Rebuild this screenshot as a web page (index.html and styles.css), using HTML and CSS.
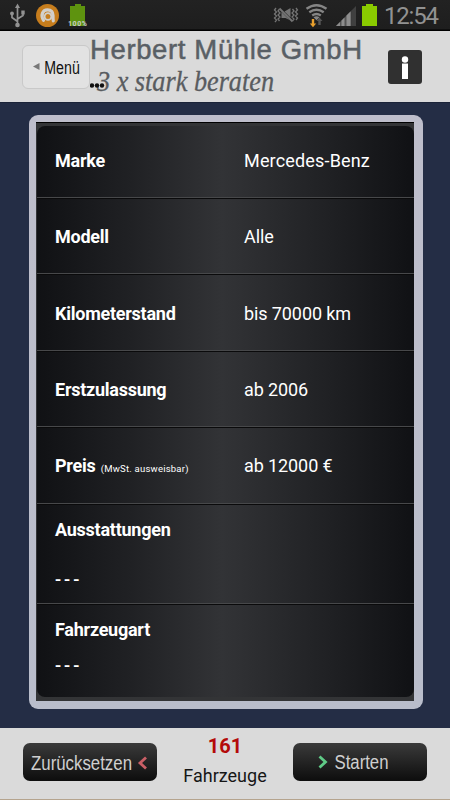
FILE: index.html
```
<!DOCTYPE html>
<html lang="de">
<head>
  <meta charset="UTF-8" />
  <meta name="viewport" content="width=device-width, initial-scale=1.0"/>
  <title>Herbert Mühle GmbH</title>
  <link rel="stylesheet" href="styles.css">
</head>
<body>
  <!-- Status bar -->
  <svg class="status-bar" width="450" height="31" viewBox="0 0 450 31">
    <!-- usb -->
    <g fill="none" stroke="#929292" stroke-width="1.7">
      <path d="M17.500 7v18M17.500 21.500l-5.500-4v-4M17.500 19l5.500-3.500v-4"/>
    </g>
    <path fill="#929292" d="M17.500 3.500l2.500 4.500h-5z"/>
    <circle cx="17.500" cy="25" r="2.300" fill="#929292"/>
    <circle cx="12" cy="13.500" r="1.900" fill="#929292"/>
    <path fill="#929292" d="M21.300 10.500h3.400v4h-3.400z"/>
    <!-- avast -->
    <circle cx="47.500" cy="15.500" r="11.500" fill="#c67d1d"/>
    <path fill="none" stroke="#d2d0cc" stroke-width="3.200" stroke-linecap="round" d="M43.500 20.300C40.500 15 42.500 9.800 47.500 9.800c3.700 0 5.500 2.500 5.500 5.500 0 2.500 0 4.500.3 5.500"/>
    <circle cx="48" cy="16.500" r="3.400" fill="none" stroke="#d2d0cc" stroke-width="1.800"/>
    <!-- battery level -->
    <path fill="#5e930f" d="M75 4h6v2h4v20H70V6h5z"/>
    <text class="battery-text" x="68" y="26" textLength="19">100%</text>
    <!-- vibrate off -->
    <g fill="none" stroke="#747474" stroke-width="1.300">
      <path d="M276 8l-1.500 2 2 2-2 2 2 2-2 2 2 2-1.500 2M279.500 9l-1.500 2 2 2-2 2 2 2-2 2 1.500 2M292.500 9l1.500 2-2 2 2 2-2 2 2 2-1.500 2M296 8l1.500 2-2 2 2 2-2 2 2 2-1.500 2"/>
      <path d="M279.500 8.500l13 13" stroke-width="1.800"/>
    </g>
    <path fill="#747474" d="M281.500 12l8 8-4-2h-4zM284.500 11.500l6-3.500v9.500z"/>
    <!-- wifi -->
    <g fill="none" stroke="#858585" stroke-width="2.300">
      <path d="M306.500 8.800q10-7.200 20 0M309.300 12.300q7.200-5.200 14.400 0M312.200 15.500q4.300-3 8.600 0"/>
    </g>
    <path fill="#858585" d="M313.500 17.200q3-2 6 0l-3 3z"/>
    <path fill="#e9a02d" d="M311.800 19h2.400v4.500h2l-3.200 3.800-3.200-3.800h2z"/>
    <path fill="#555" d="M318.300 25v-4h-1.800l3-3.500 3 3.500h-1.800v4z"/>
    <!-- signal -->
    <path fill="#555" d="M336 26l15.500-15.500V26z"/>
    <path fill="#8d8d8d" d="M336 26l4-4v4zM341.500 20.500l3-3V26h-3zM346.500 15.500l4-4V26h-4z"/>
    <path fill="#404040" d="M351.500 10.500L356 6v20h-4.500z"/>
    <!-- battery -->
    <path fill="#8acb00" d="M366 4h7v2h4v20h-15V6h4z"/>
    <text class="clock" x="384" y="23.500" textLength="55">12:54</text>
  </svg>

  <header class="header">
    <button class="menu-btn">
      <svg width="66" height="42" viewBox="0 0 66 42">
        <path fill="#777" d="M10 20.500l6.500-3.500v7z"/>
        <text class="menu-label" x="21.300" y="27.500" textLength="35.500" lengthAdjust="spacingAndGlyphs">Menü</text>
      </svg>
    </button>
    <svg class="logo" width="275" height="68" viewBox="0 0 275 68">
      <text class="logo-name" x="0" y="28" textLength="272">Herbert Mühle GmbH</text>
      <text class="logo-claim" x="7" y="60" textLength="177" lengthAdjust="spacingAndGlyphs">3 x stark beraten</text>
      <g fill="#111">
        <circle cx="2" cy="54.500" r="2.200"/>
        <circle cx="7" cy="54.500" r="2.200"/>
        <circle cx="12" cy="54.500" r="2.200"/>
      </g>
    </svg>
    <button class="info-btn">
      <svg width="34" height="34" viewBox="0 0 34 34">
        <circle cx="17" cy="9.500" r="3.200" fill="#fff"/>
        <path fill="#fff" d="M14 13.500h6V29h-6z"/>
      </svg>
    </button>
  </header>

  <main class="main">
    <div class="panel">
      <div class="panel-inner">
        <div class="list">
          <div class="row first"><span class="label">Marke</span><span class="value brand">Mercedes-Benz</span></div>
          <div class="row"><span class="label">Modell</span><span class="value">Alle</span></div>
          <div class="row"><span class="label">Kilometerstand</span><span class="value">bis 70000 km</span></div>
          <div class="row"><span class="label">Erstzulassung</span><span class="value">ab 2006</span></div>
          <div class="row"><span class="label">Preis <small>(MwSt. ausweisbar)</small></span><span class="value">ab 12000 €</span></div>
          <div class="row tall equip"><span class="label">Ausstattungen</span><span class="dashes">---</span></div>
          <div class="row tall type"><span class="label">Fahrzeugart</span><span class="dashes">---</span></div>
        </div>
      </div>
    </div>
  </main>

  <footer class="footer">
    <button class="action-btn">
      <svg width="134" height="38" viewBox="0 0 134 38">
        <text class="action-label" x="8" y="26.500" textLength="101" lengthAdjust="spacingAndGlyphs">Zurücksetzen</text>
        <path fill="none" stroke="#c95f66" stroke-width="2.800" d="M123 14.500l-6 5.500 6 5.500"/>
      </svg>
    </button>
    <div class="count">
      <span class="count-number">161</span>
      <span class="count-label">Fahrzeuge</span>
    </div>
    <button class="action-btn">
      <svg width="134" height="38" viewBox="0 0 134 38">
        <path fill="none" stroke="#5fca86" stroke-width="2.800" d="M26.500 13.500l6 5.500-6 5.500"/>
        <text class="action-label" x="41.500" y="26" textLength="54" lengthAdjust="spacingAndGlyphs">Starten</text>
      </svg>
    </button>
  </footer>
</body>
</html>
```
FILE: styles.css
```
* {
  box-sizing: border-box;
}

body {
  margin: 0;
  width: 450px;
  height: 800px;
  overflow: hidden;
  display: flex;
  flex-direction: column;
  background: #242d45;
  font-family: Roboto, sans-serif;
}

button {
  padding: 0;
  border: 0;
  background: none;
  cursor: pointer;
}

svg {
  display: block;
}

.status-bar {
  flex: none;
  background: linear-gradient(#222 0, #1e1e1e 29px, #000 30px);
}

.battery-text {
  font: bold 7px Roboto, sans-serif;
  fill: #ccc;
}

.clock {
  font: 24px Roboto, sans-serif;
  fill: #929292;
}

.header {
  flex: none;
  height: 71px;
  display: flex;
  align-items: flex-start;
  padding: 0 28px 0 22px;
  background: #dadada;
}

.menu-btn {
  width: 68px;
  height: 44px;
  margin-top: 14px;
  border: 1px solid #c9c9c9;
  border-radius: 6px;
  background: #e2e2e2;
}

.menu-label {
  font: 18px "Liberation Sans", sans-serif;
  fill: #111;
}

.logo-name {
  font: 27.500px "Liberation Sans", sans-serif;
  fill: #595f65;
  stroke: #595f65;
  stroke-width: .5px;
}

.logo-claim {
  font: italic 29px "Liberation Serif", serif;
  fill: #595c60;
  stroke: #595c60;
  stroke-width: .3px;
}

.info-btn {
  width: 34px;
  height: 34px;
  margin: 19px 0 0 auto;
  border-radius: 3px;
  background: #303030;
}

.main {
  flex: none;
  height: 626px;
  padding: 12px 27px 20px 29px;
  background: #242d45;
  border-top: 1px solid #1b2338;
}

.panel {
  height: 594px;
  padding: 7px 9px 8px 7px;
  border-radius: 9px;
  background: linear-gradient(#bebecb, #b9bdcb);
}

.panel-inner {
  height: 579px;
  padding: 3px 0 4px 1px;
  border-top: 1px solid #000;
  background: #333436;
}

.list {
  height: 571px;
  border-radius: 8px;
  overflow: hidden;
  background: linear-gradient(90deg, #101114, #202124 25%, #323336 49%, #2f3033 54%, #202124 77%, #101114);
}

.row {
  height: 76.400px;
  display: flex;
  align-items: center;
  padding-left: 18px;
  border-bottom: 1px solid #0a0a0b;
  box-shadow: inset 0 -1px #47484a;
  color: #fff;
  font-size: 18px;
}

.row.first {
  height: 73px;
  padding-bottom: 3px;
}

.label {
  width: 189px;
  font-weight: bold;
  letter-spacing: -.25px;
}

.label small {
  margin-left: 1px;
  font-size: 9.500px;
  font-weight: normal;
  letter-spacing: .22px;
}

.value {
  letter-spacing: -.1px;
}

.brand {
  letter-spacing: .17px;
}

.tall {
  flex-direction: column;
  align-items: flex-start;
}

.equip {
  height: 100px;
  padding-top: 14px;
  gap: 29px;
}

.type {
  height: 92px;
  padding-top: 14px;
  gap: 15px;
  border: 0;
  box-shadow: none;
}

.dashes {
  font-weight: 500;
  letter-spacing: 3px;
}

.footer {
  flex: none;
  height: 72px;
  display: flex;
  justify-content: space-between;
  padding: 0 23px;
  background: #dadada;
  border-bottom: 1px solid #b5a48e;
}

.action-btn {
  width: 134px;
  height: 38px;
  margin-top: 15px;
  border-radius: 7px;
  background: linear-gradient(#3a3a3a, #0d0d0d);
}

.action-label {
  font: 20px "Liberation Sans", sans-serif;
  fill: #cfcfcf;
}

.count {
  display: flex;
  flex-direction: column;
  align-items: center;
  padding-top: 6px;
  line-height: 24px;
}

.count-number {
  color: #b40a0a;
  font-size: 20px;
  font-weight: bold;
}

.count-label {
  margin-top: 6px;
  color: #161616;
  font-size: 18px;
}
```
